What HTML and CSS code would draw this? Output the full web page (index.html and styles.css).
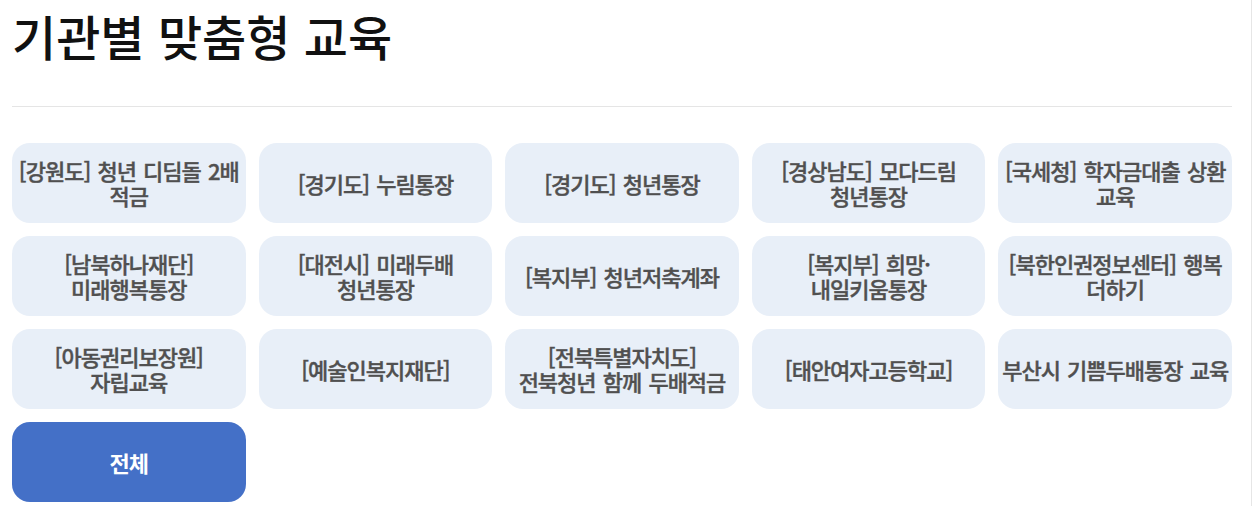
FILE: index.html
```html
<!DOCTYPE html>
<html lang="ko">
<head>
<meta charset="utf-8">
<title>기관별 맞춤형 교육</title>
<link rel="stylesheet" href="styles.css">
</head>
<body>
<div class="page">
  <h1 class="title">기관별 맞춤형 교육</h1>
  <hr class="divider">
  <div class="grid">
    <button class="chip">[강원도] 청년 디딤돌 2배 적금</button>
    <button class="chip">[경기도] 누림통장</button>
    <button class="chip">[경기도] 청년통장</button>
    <button class="chip">[경상남도] 모다드림 청년통장</button>
    <button class="chip">[국세청] 학자금대출 상환 교육</button>
    <button class="chip">[남북하나재단]<br>미래행복통장</button>
    <button class="chip">[대전시] 미래두배<br>청년통장</button>
    <button class="chip">[복지부] 청년저축계좌</button>
    <button class="chip">[복지부] 희망·<br>내일키움통장</button>
    <button class="chip">[북한인권정보센터] 행복 더하기</button>
    <button class="chip">[아동권리보장원]<br>자립교육</button>
    <button class="chip">[예술인복지재단]</button>
    <button class="chip">[전북특별자치도]<br>전북청년 함께 두배적금</button>
    <button class="chip">[태안여자고등학교]</button>
    <button class="chip">부산시 기쁨두배통장 교육</button>
    <button class="chip chip-active">전체</button>
  </div>
</div>
</body>
</html>
```

FILE: styles.css
```css
html, body {
  margin: 0;
  padding: 0;
  background: #ffffff;
}

body {
  font-family: "Noto Sans CJK KR", "Noto Sans", sans-serif;
}

.page {
  width: 1252px;
  height: 506px;
  box-sizing: border-box;
  padding: 0 19px 0 12px;
  border-right: 1px solid #e6e6e6;
  overflow: hidden;
}

.title {
  margin: 0;
  padding-top: 2px;
  font-size: 48px;
  line-height: 66px;
  font-weight: 500;
  color: #111111;
  letter-spacing: 0;
}

.divider {
  margin: 38px 0 0 0;
  border: 0;
  border-top: 1px solid #e5e5e5;
  height: 0;
}

.grid {
  margin-top: 36px;
  display: grid;
  grid-template-columns: repeat(5, 1fr);
  grid-auto-rows: 80px;
  gap: 13px 13px;
}

.chip {
  border: 0;
  border-radius: 18px;
  background: #e8eff8;
  color: #505050;
  font-family: "Noto Sans CJK KR", "Noto Sans", sans-serif;
  font-size: 22px;
  font-weight: 500;
  line-height: 25px;
  letter-spacing: -1px;
  word-spacing: 2px;
  word-break: keep-all;
  -webkit-text-stroke: 0.4px #505050;
  padding: 0 3px;
  text-align: center;
  cursor: pointer;
}

.chip-active {
  background: #4470c7;
  color: #ffffff;
  font-weight: 700;
  -webkit-text-stroke: 0;
}
```
